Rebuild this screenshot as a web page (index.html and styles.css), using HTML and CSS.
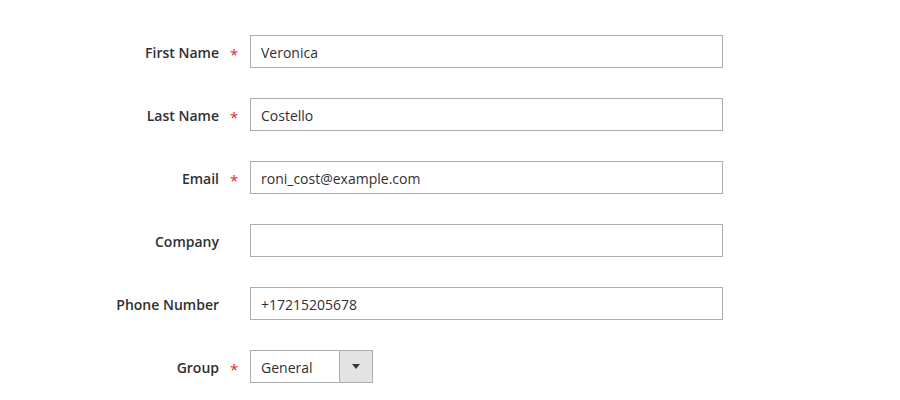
FILE: index.html
```html
<!DOCTYPE html>
<html lang="en">
<head>
<meta charset="utf-8">
<title>Customer</title>
<link rel="stylesheet" href="styles.css">
</head>
<body>
<form class="form">
  <div class="row">
    <label class="label">First Name</label>
    <span class="req">*</span>
    <div class="input">Veronica</div>
  </div>
  <div class="row">
    <label class="label">Last Name</label>
    <span class="req">*</span>
    <div class="input">Costello</div>
  </div>
  <div class="row">
    <label class="label">Email</label>
    <span class="req">*</span>
    <div class="input">roni_cost@example.com</div>
  </div>
  <div class="row">
    <label class="label">Company</label>
    <span class="req"></span>
    <div class="input"></div>
  </div>
  <div class="row">
    <label class="label">Phone Number</label>
    <span class="req"></span>
    <div class="input">+17215205678</div>
  </div>
  <div class="row">
    <label class="label">Group</label>
    <span class="req">*</span>
    <div class="select">
      <span class="select-value">General</span>
      <span class="select-btn"><svg width="8" height="5" viewBox="0 0 8 5"><path d="M0 0H8L4 5Z" fill="#41362f"/></svg></span>
    </div>
  </div>
</form>
</body>
</html>
```
FILE: styles.css
```css
html, body {
  margin: 0;
  padding: 0;
  background: #ffffff;
}
body {
  font-family: "Open Sans", "Noto Sans", sans-serif;
  font-size: 14px;
  color: #303030;
}
.form {
  display: flex;
  flex-direction: column;
  gap: 30px;
  padding-top: 35px;
}
.row {
  display: grid;
  grid-template-columns: 220px 30px 473px;
  align-items: center;
  height: 33px;
}
.label {
  text-align: right;
  font-weight: 600;
  color: #303030;
  padding-right: 1px;
  padding-top: 2px;
}
.req {
  color: #e22626;
  font-size: 15px;
  padding-left: 10px;
  line-height: 1;
  position: relative;
  top: 3px;
}
.input {
  box-sizing: border-box;
  height: 33px;
  border: 1px solid #adadad;
  padding: 2px 10px 0;
  display: flex;
  align-items: center;
  color: #303030;
  background: #fff;
}
.select {
  box-sizing: border-box;
  width: 123px;
  height: 33px;
  border: 1px solid #adadad;
  display: flex;
  align-items: stretch;
}
.select-value {
  flex: 1;
  display: flex;
  align-items: center;
  padding: 2px 0 0 10px;
}
.select-btn {
  width: 32px;
  background: #e3e3e3;
  border-left: 1px solid #adadad;
  display: flex;
  align-items: center;
  justify-content: center;
}
```
